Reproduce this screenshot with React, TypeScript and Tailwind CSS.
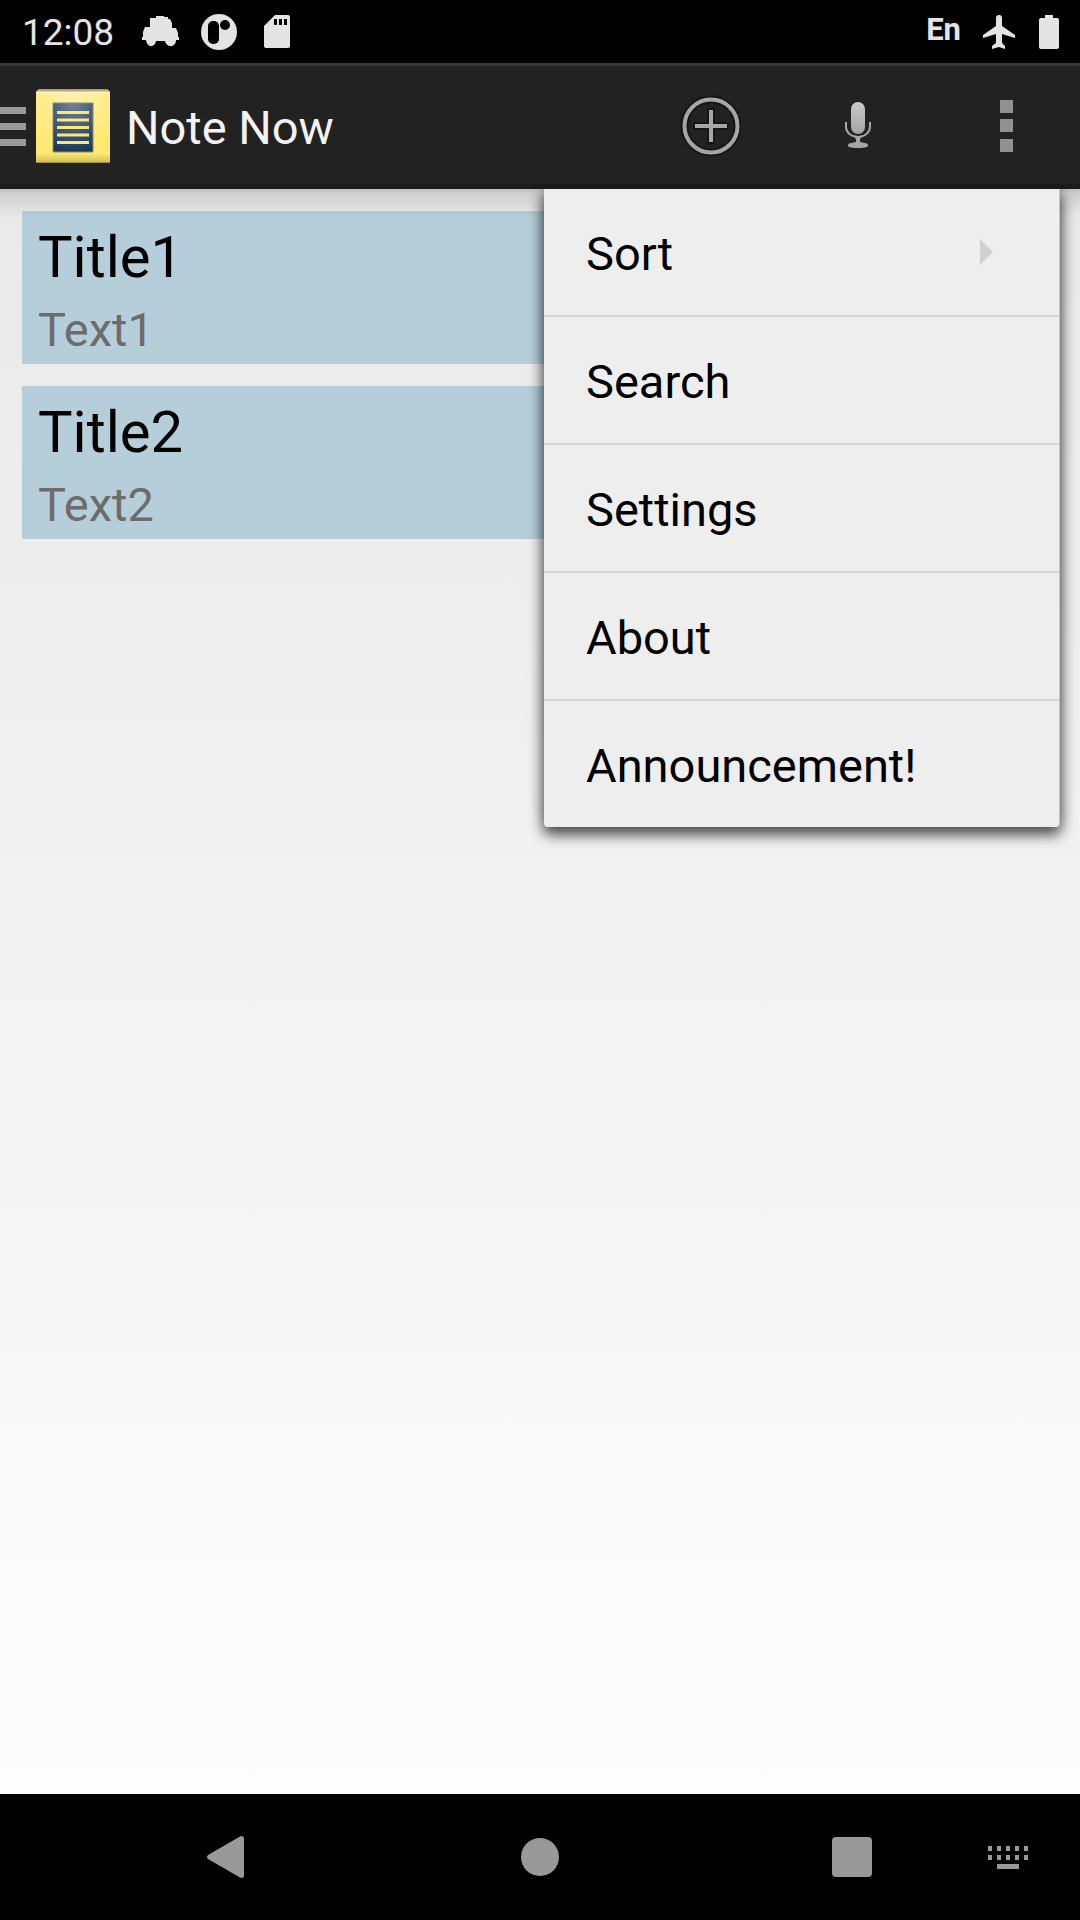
import React from "react";

const notes = [
  { title: "Title1", text: "Text1" },
  { title: "Title2", text: "Text2" },
];

const menuItems = ["Sort", "Search", "Settings", "About", "Announcement!"];

function StatusBar() {
  return (
    <div className="flex h-[63px] items-center justify-between bg-black pl-[22px] pr-[21px] text-[#e4e4e4]">
      <div className="flex items-center">
        <span className="w-[119px] pt-[2px] text-[37px] leading-[44px]">12:08</span>
        <svg width="38" height="36" viewBox="0 0 38 36" fill="currentColor" aria-hidden="true">
          <path d="M15 3V2h8v1h4v2h2l2 4v5h4l2 5v4h1v3h-3c0 8-10 8-11 1h-9c-1 7-9 7-10-1H1v-3h1v-5l2-5h5V4h6z" />
        </svg>
        <svg className="ml-[21px]" width="38" height="38" viewBox="0 0 38 38" aria-hidden="true">
          <circle cx="19" cy="19" r="18" fill="currentColor" />
          <rect x="8" y="8" width="11" height="23" rx="5" fill="#000" />
          <circle cx="25" cy="12" r="5" fill="#000" />
        </svg>
        <svg className="ml-[25px]" width="28" height="34" viewBox="0 0 28 34" aria-hidden="true">
          <path d="M12 0h13a2 2 0 0 1 2 2v29a2 2 0 0 1-2 2H3a2 2 0 0 1-2-2V11z" fill="currentColor" />
          <path d="M11 4h3v6h-3zM16 4h3v6h-3zM21 4h3v6h-3z" fill="#000" />
        </svg>
      </div>
      <div className="flex items-center">
        <span className="mr-[21px] pb-1 text-[31px] font-bold leading-[40px]">En</span>
        <svg width="34" height="36" viewBox="0 0 34 36" fill="currentColor" aria-hidden="true">
          <path d="M33 24v-3L20 12V4a3 3 0 0 0-6 0v8L1 21v3l13-4v9l-4 3v3l7-2 6 2v-3l-3-3v-9z" />
        </svg>
        <svg className="ml-[23px]" width="20" height="34" viewBox="0 0 20 34" fill="currentColor" aria-hidden="true">
          <path d="M6 0h8v3h4a2 2 0 0 1 2 2v27a2 2 0 0 1-2 2H2a2 2 0 0 1-2-2V5a2 2 0 0 1 2-2h4z" />
        </svg>
      </div>
    </div>
  );
}

function AppIcon() {
  return (
    <svg width="74" height="74" viewBox="0 0 74 74" aria-hidden="true">
      <defs>
        <radialGradient id="paper" cx="0.5" cy="0.05" r="0.75">
          <stop offset="0" stopColor="#fff1b4" />
          <stop offset="1" stopColor="#fee971" />
        </radialGradient>
        <linearGradient id="fold" x1="0" y1="0" x2="0" y2="1">
          <stop offset="0" stopColor="#998c4a" />
          <stop offset="1" stopColor="#e3d9a0" />
        </linearGradient>
        <linearGradient id="base" x1="0" y1="0" x2="0" y2="1">
          <stop offset="0" stopColor="#d8c55c" stopOpacity="0" />
          <stop offset="1" stopColor="#c9b754" />
        </linearGradient>
        <radialGradient id="page" cx="0.5" cy="0" r="1">
          <stop offset="0" stopColor="#72839a" />
          <stop offset="1" stopColor="#1d3a5e" />
        </radialGradient>
      </defs>
      <path d="M0 3l3-3h68l3 3v71H0z" fill="url(#paper)" />
      <path d="M0 3l3-3h68l3 3z" fill="url(#fold)" />
      <path d="M0 3h74v1H0z" fill="#fff6cb" />
      <path d="M0 64h74v10H0z" fill="url(#base)" />
      <path d="M0 73h74v1H0z" fill="#a09143" />
      <path d="M17 14h40v49H17z" fill="url(#page)" stroke="#8d8b63" strokeWidth="1" />
      <path d="M21 23.500h32M21 31h32M21 38.500h32M21 46h32M21 53.500h32" stroke="#fbe77c" strokeWidth="3" />
    </svg>
  );
}

function ActionBar() {
  return (
    <header className="flex h-[126px] items-center bg-[#222222] shadow-[inset_0_3px_0_#383838,inset_0_-5px_0_#1b1b1b]">
      <button className="flex items-center" aria-label="Open navigation drawer">
        <svg width="27" height="40" viewBox="0 0 27 40" fill="#999999" aria-hidden="true">
          <path d="M0 1h26v7H0zM0 17h26v7H0zM0 33h26v7H0z" />
        </svg>
        <span className="ml-[9px]">
          <AppIcon />
        </span>
      </button>
      <h1 className="ml-4 flex-1 pt-[4px] text-[47px] leading-[56px] text-[#f3f3f3]">Note Now</h1>
      <button className="flex h-full w-[148px] items-center justify-center" aria-label="Add note">
        <svg width="64" height="64" viewBox="0 0 64 64" fill="none" aria-hidden="true">
          <circle cx="32" cy="32" r="26.500" stroke="#161616" strokeWidth="8" />
          <path d="M14 32h36M32 14v36" stroke="#161616" strokeWidth="8" />
          <circle cx="32" cy="32" r="26.500" stroke="#a6a6a6" strokeWidth="4" />
          <path d="M16 32h32M32 16v32" stroke="#a6a6a6" strokeWidth="4" />
        </svg>
      </button>
      <button className="flex h-full w-[146px] items-center justify-center" aria-label="Voice note">
        <svg width="28" height="48" viewBox="0 0 28 48" fill="none" aria-hidden="true">
          <defs>
            <linearGradient id="mic" x1="0" y1="0" x2="0" y2="1">
              <stop offset="0" stopColor="#cacaca" />
              <stop offset="1" stopColor="#a4a4a4" />
            </linearGradient>
          </defs>
          <rect x="7" y="0" width="14" height="32" rx="7" fill="url(#mic)" />
          <path d="M2 20v5c0 5 5 10 12 10s12-5 12-10v-5" stroke="#a6a6a6" strokeWidth="2" />
          <path d="M11 35h6l-1 3v2l7 1.500a2 2 0 0 1 1 2c0 1.500-2 2.500-10 2.500S4 45 4 43.500a2 2 0 0 1 1-2L12 40v-2z" fill="#a6a6a6" />
        </svg>
      </button>
      <button className="flex h-full w-[149px] items-center justify-center pl-[2px]" aria-label="More options" aria-expanded="true">
        <svg width="13" height="52" viewBox="0 0 13 52" fill="#919191" aria-hidden="true">
          <path d="M0 0h13v13H0zM0 19h13v13H0zM0 39h13v13H0z" />
        </svg>
      </button>
    </header>
  );
}

function OverflowMenu() {
  return (
    <ul
      role="menu"
      className="absolute right-[20px] top-0 w-[516px] divide-y-2 divide-[#d6d6d6] rounded-b-[4px] border-r border-[#c4c4c4] bg-[#eeeeee] shadow-[0_8px_14px_rgba(0,0,0,0.6),0_0_16px_rgba(0,0,0,0.4)]"
    >
      {menuItems.map((label) => (
        <li key={label} role="none">
          <button
            role="menuitem"
            className="flex h-[126px] w-full items-center justify-between pl-[42px] pr-[66px] text-left text-[47px] leading-[56px]"
          >
            <span className="pt-[4px]">{label}</span>
            {label === "Sort" && (
              <svg width="13" height="26" viewBox="0 0 13 26" fill="#d0d0d0" aria-hidden="true">
                <path d="M0 0l13 13L0 26z" />
              </svg>
            )}
          </button>
        </li>
      ))}
    </ul>
  );
}

function NavigationBar() {
  return (
    <nav className="grid h-[126px] grid-cols-[31fr_52fr_104fr_52fr_26fr_5fr] bg-black text-[#999999]">
      <button className="col-start-2 flex items-center justify-center" aria-label="Back">
        <svg width="42" height="42" viewBox="0 0 42 42" fill="currentColor" aria-hidden="true">
          <path d="M1 19L33 0.500Q37 -1 37 3V39Q37 43 33 41.500L1 23Q-1 21 1 19z" />
        </svg>
      </button>
      <button className="flex items-center justify-center" aria-label="Home">
        <span className="size-[38px] rounded-full bg-[#999999]" />
      </button>
      <button className="flex items-center justify-center" aria-label="Recent apps">
        <span className="size-10 rounded-[4px] bg-[#999999]" />
      </button>
      <button className="flex items-center justify-center" aria-label="Switch keyboard">
        <svg width="40" height="23" viewBox="0 0 40 23" fill="currentColor" aria-hidden="true">
          <path d="M0 0h4v5H0zM9 0h4v5H9zM18 0h4v5h-4zM27 0h4v5h-4zM36 0h4v5h-4zM0 9h4v5H0zM9 9h4v5H9zM18 9h4v5h-4zM27 9h4v5h-4zM36 9h4v5h-4zM9 18h22v5H9z" />
        </svg>
      </button>
    </nav>
  );
}

export default function App() {
  return (
    <div className="flex min-h-screen w-full flex-col font-[Roboto,sans-serif] text-black">
      <StatusBar />
      <ActionBar />
      <main className="relative flex-1 overflow-hidden bg-linear-to-b from-[#e9e9e9] to-[#fdfdfd] p-[22px]">
        <ul className="flex flex-col gap-[22px]">
          {notes.map((note) => (
            <li key={note.title} className="bg-[#b6ceda] px-4 pb-[6px] pt-3">
              <h2 className="text-[58px] leading-[68px]">{note.title}</h2>
              <p className="mt-[11px] text-[47px] leading-[56px] text-[#6c6c6c]">{note.text}</p>
            </li>
          ))}
        </ul>
        <div className="pointer-events-none absolute inset-x-0 top-0 h-7 border-t-[3px] border-black/15 bg-linear-to-b from-black/12 to-transparent" />
        <OverflowMenu />
      </main>
      <NavigationBar />
    </div>
  );
}
